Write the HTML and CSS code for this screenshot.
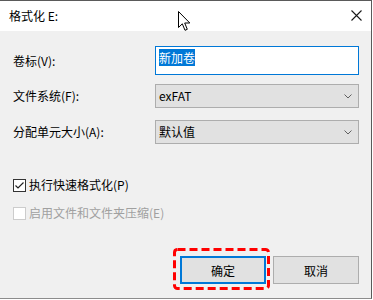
FILE: index.html
```html
<!DOCTYPE html>
<html lang="zh-CN">
<head>
<meta charset="utf-8">
<title>格式化 E:</title>
<link rel="stylesheet" href="styles.css">
</head>
<body>
<div class="window">
  <div class="titlebar">
    <span class="title">格式化 E:</span>
    <svg class="close" width="11" height="11" viewBox="0 0 11 11"><path d="M0.5 0.5 L10.5 10.5 M10.5 0.5 L0.5 10.5" stroke="#1a1a1a" stroke-width="1.1" fill="none"/></svg>
  </div>
  <div class="content">
    <div class="row row-first">
      <label class="label">卷标(V):</label>
      <div class="input"><span class="sel">新加卷</span></div>
    </div>
    <div class="row row-second">
      <label class="label">文件系统(F):</label>
      <div class="combo"><span>exFAT</span><svg class="chev" width="8" height="5" viewBox="0 0 8 5"><path d="M0.5 0.5 L4 4 L7.5 0.5" stroke="#606060" stroke-width="1" fill="none"/></svg></div>
    </div>
    <div class="row row-third">
      <label class="label">分配单元大小(A):</label>
      <div class="combo"><span>默认值</span><svg class="chev" width="8" height="5" viewBox="0 0 8 5"><path d="M0.5 0.5 L4 4 L7.5 0.5" stroke="#606060" stroke-width="1" fill="none"/></svg></div>
    </div>
    <div class="check check-first">
      <span class="box"><svg width="11" height="11" viewBox="0 0 11 11"><path d="M1.5 5.5 L4 8 L9.5 2.5" stroke="#222" stroke-width="1.2" fill="none"/></svg></span>
      <span>执行快速格式化(P)</span>
    </div>
    <div class="check check-disabled">
      <span class="box"></span>
      <span>启用文件和文件夹压缩(E)</span>
    </div>
    <div class="buttons">
      <span class="focus-wrap">
        <button class="btn btn-default">确定</button>
        <svg class="mark" width="97" height="42" viewBox="0 0 97 42"><rect x="1.5" y="1.5" width="94" height="39" rx="3" ry="3" fill="none" stroke="#ff0000" stroke-width="3" stroke-dasharray="8 4"/></svg>
      </span>
      <button class="btn">取消</button>
    </div>
  </div>
  <svg class="cursor" width="13" height="21" viewBox="0 0 13 21"><path d="M0.5 0.5 L0.5 16.5 L4.3 12.8 L7 19.3 L9.3 18.3 L6.7 12 L11.8 12 Z" fill="#fff" stroke="#000" stroke-width="1" stroke-linejoin="miter"/></svg>
</div>
</body>
</html>
```

FILE: styles.css
```css
html, body {
  margin: 0;
  padding: 0;
  background: #ffffff;
}
body {
  width: 373px;
  height: 300px;
  overflow: hidden;
  font-family: "Noto Sans CJK SC", "Noto Sans", sans-serif;
  font-size: 12px;
  color: #000;
}
.window {
  position: relative;
  box-sizing: border-box;
  width: 372px;
  height: 299px;
  border-top: 1px solid #5a5a5a;
  border-right: 1px solid #5a5a5a;
  border-bottom: 1px solid #8c8c8c;
  display: flex;
  flex-direction: column;
  background: #f0f0f0;
}
.titlebar {
  height: 30px;
  flex: 0 0 30px;
  background: #ffffff;
  display: flex;
  align-items: center;
  justify-content: space-between;
  padding: 0 9px 0 9px;
}
.title {
  line-height: 16px;
  margin-top: -1px;
}
.close {
  display: block;
  margin-top: -1px;
}
.content {
  flex: 1;
  padding: 15px 12px 0 13px;
  display: flex;
  flex-direction: column;
}
.row {
  display: flex;
  align-items: center;
}
.row-second { margin-top: 9px; }
.row-third { margin-top: 12px; }
.label {
  width: 142px;
  flex: 0 0 142px;
  line-height: 16px;
}
.input {
  box-sizing: border-box;
  width: 205px;
  height: 29px;
  background: #ffffff;
  border: 1px solid #0078d7;
  padding: 2px 0 0 3px;
  display: flex;
  align-items: flex-start;
}
.sel {
  background: #0078d7;
  color: #ffffff;
  line-height: 17px;
  height: 17px;
}
.combo {
  box-sizing: border-box;
  width: 205px;
  height: 24px;
  background: #e1e1e1;
  border: 1px solid #adadad;
  padding: 0 6px 0 3px;
  display: flex;
  align-items: center;
  justify-content: space-between;
  line-height: 16px;
}
.chev { display: block; }
.check {
  display: flex;
  align-items: center;
  height: 20px;
  line-height: 16px;
}
.check-first { margin-top: 31px; }
.check-disabled {
  margin-top: 8px;
  color: #a0a0a0;
}
.box {
  box-sizing: border-box;
  width: 13px;
  height: 13px;
  border: 1px solid #333333;
  background: #ffffff;
  margin-right: 3px;
  display: flex;
  align-items: center;
  justify-content: center;
}
.box svg { display: block; }
.check-disabled .box {
  border-color: #cccccc;
}
.buttons {
  margin-top: 33px;
  display: flex;
  justify-content: flex-end;
  gap: 7px;
  padding-right: 0;
}
.focus-wrap {
  position: relative;
  display: block;
}
.btn {
  box-sizing: border-box;
  width: 86px;
  height: 28px;
  margin: 0;
  padding: 0;
  background: #e1e1e1;
  border: 1px solid #adadad;
  font-family: "Noto Sans CJK SC", "Noto Sans", sans-serif;
  font-size: 12px;
  color: #000;
  display: block;
}
.btn-default {
  border: 2px solid #0078d7;
}
.mark {
  position: absolute;
  left: -7px;
  top: -8px;
  pointer-events: none;
}
.cursor {
  position: absolute;
  left: 178px;
  top: 10px;
}
```
